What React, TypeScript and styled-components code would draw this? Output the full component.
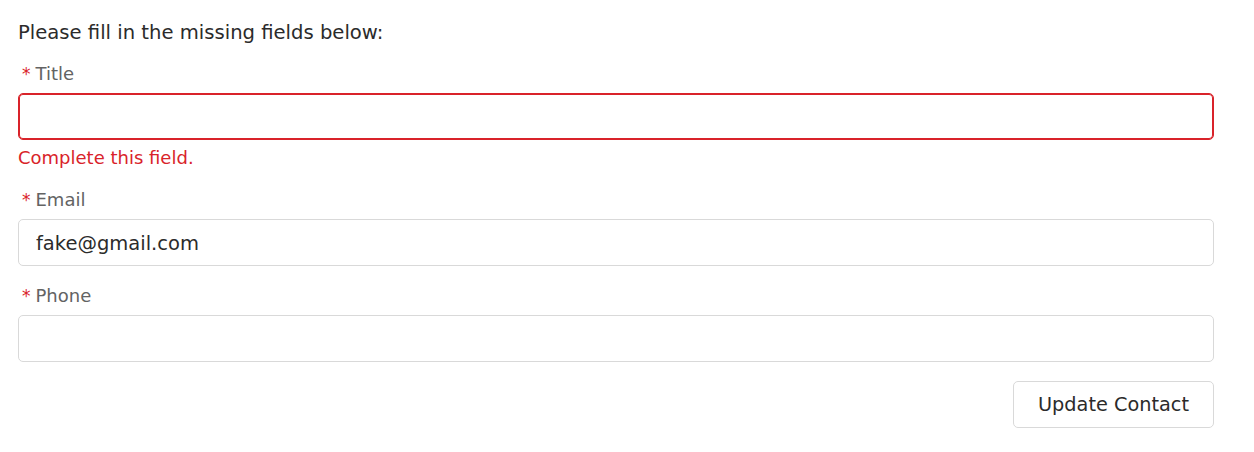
import React from "react";
import styled, { createGlobalStyle } from "styled-components";

const Global = createGlobalStyle`
  html, body { margin: 0; padding: 0; background: #ffffff; }
  body { font-family: "DejaVu Sans", Verdana, sans-serif; }
  * { box-sizing: border-box; }
`;

const Form = styled.form`
  width: 1232px;
  padding: 21px 18px 0 18px;
  display: flex;
  flex-direction: column;
  gap: 18px;
`;

const Intro = styled.p`
  margin: 0;
  font-size: 19.6px;
  line-height: 23px;
  color: #2b2b2b;
`;

const Field = styled.div`
  display: flex;
  flex-direction: column;
`;

const Label = styled.label`
  display: flex;
  align-items: center;
  font-size: 18px;
  line-height: 24px;
  color: #636363;
  margin-bottom: 7px;
  padding-left: 4px;
`;

const Required = styled.abbr`
  color: #d9232a;
  text-decoration: none;
  margin-right: 5px;
  font-size: 17px;
`;

const Input = styled.input<{ $error?: boolean }>`
  width: 100%;
  height: 47px;
  margin: 0;
  padding: 1px 17px 0 17px;
  font-family: "DejaVu Sans", Verdana, sans-serif;
  font-size: 19.5px;
  color: #2b2b2b;
  background: #ffffff;
  border: 1px solid ${(p) => (p.$error ? "#d9232a" : "#d9d9d9")};
  box-shadow: ${(p) => (p.$error ? "inset 0 0 0 1px #d9232a" : "none")};
  border-radius: 5px;
  outline: none;
`;

const ErrorText = styled.div`
  margin-top: 6px;
  font-size: 18px;
  line-height: 24px;
  color: #d9232a;
`;

const Actions = styled.div`
  display: flex;
  justify-content: flex-end;
  padding-top: 1px;
`;

const Button = styled.button`
  width: 201px;
  height: 47px;
  padding: 0;
  font-family: "DejaVu Sans", Verdana, sans-serif;
  font-size: 19.3px;
  color: #2b2b2b;
  background: #ffffff;
  border: 1px solid #d9d9d9;
  border-radius: 5px;
  cursor: pointer;
`;

export default function App() {
  return (
    <>
      <Global />
      <Form onSubmit={(e) => e.preventDefault()}>
        <Intro>Please fill in the missing fields below:</Intro>
        <Field>
          <Label>
            <Required title="required">*</Required>Title
          </Label>
          <Input $error defaultValue="" />
          <ErrorText>Complete this field.</ErrorText>
        </Field>
        <Field>
          <Label>
            <Required title="required">*</Required>Email
          </Label>
          <Input defaultValue="fake@gmail.com" />
        </Field>
        <Field>
          <Label>
            <Required title="required">*</Required>Phone
          </Label>
          <Input defaultValue="" />
        </Field>
        <Actions>
          <Button type="button">Update Contact</Button>
        </Actions>
      </Form>
    </>
  );
}
